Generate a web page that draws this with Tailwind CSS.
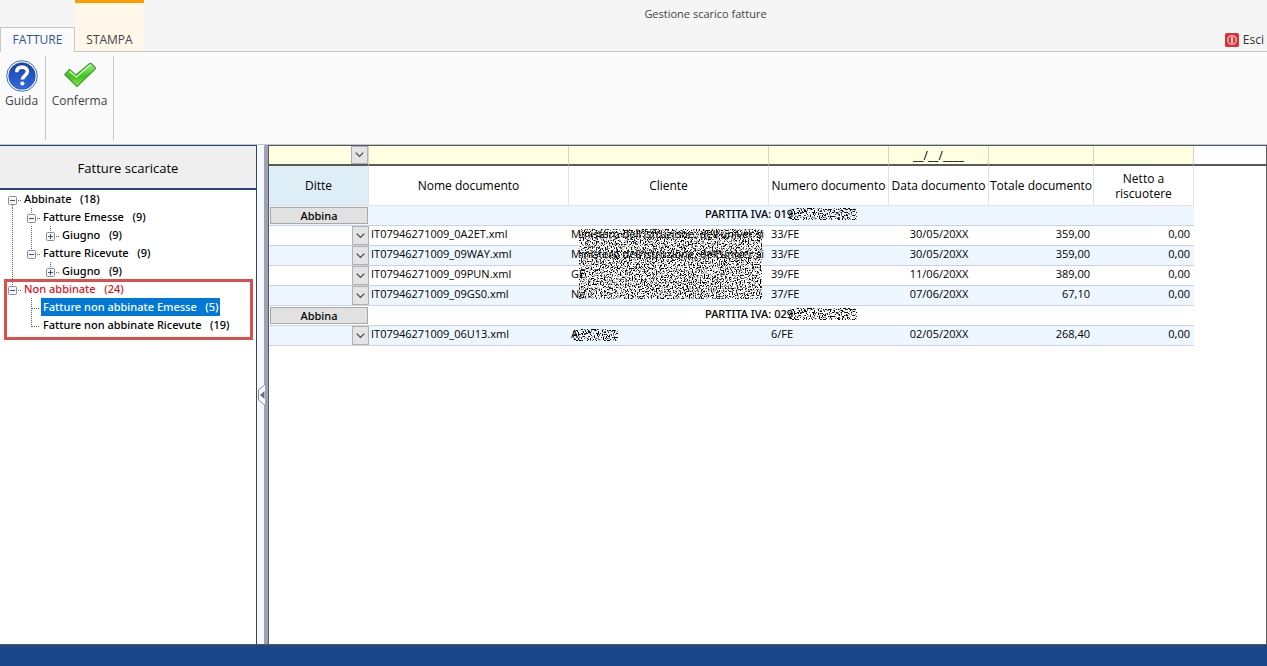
<!DOCTYPE html>
<html lang="it">
<head>
    <meta charset="UTF-8">
    <meta name="viewport" content="width=device-width, initial-scale=1.0">
    <script src="https://cdn.jsdelivr.net/npm/@tailwindcss/browser@4"></script>
    <title>Gestione scarico fatture</title>
</head>
<body class="flex h-screen flex-col overflow-hidden bg-[#f5f5f5] font-['Open_Sans',sans-serif] text-[12px] leading-4 text-black">
    <!-- Shared drawings -->
    <svg class="hidden" aria-hidden="true">
        <symbol id="tree-line" viewBox="0 0 19 18"><path d="M9.5 0v18" stroke="#666" stroke-dasharray="1 1" /></symbol>
        <symbol id="tree-tee" viewBox="0 0 19 18"><path d="M9.5 0v18M10 10.500h8" stroke="#666" stroke-dasharray="1 1" /></symbol>
        <symbol id="tree-elbow" viewBox="0 0 19 18"><path d="M9.5 0v11M10 10.500h8" stroke="#666" stroke-dasharray="1 1" /></symbol>
        <symbol id="tree-root" viewBox="0 0 19 18">
            <path d="M9.500 15v3M15 10.500h4" stroke="#666" stroke-dasharray="1 1" />
            <rect x="5.500" y="6.500" width="8" height="8" rx="1" fill="#f6f6f6" stroke="#8c8c8c" />
            <path d="M7 10.500h5" stroke="#3c4f9a" />
        </symbol>
        <symbol id="tree-minus" viewBox="0 0 19 18">
            <path d="M9.500 0v6M15 10.500h4" stroke="#666" stroke-dasharray="1 1" />
            <rect x="5.500" y="6.500" width="8" height="8" rx="1" fill="#f6f6f6" stroke="#8c8c8c" />
            <path d="M7 10.500h5" stroke="#3c4f9a" />
        </symbol>
        <symbol id="tree-plus" viewBox="0 0 19 18">
            <path d="M9.500 0v6M15 10.500h4" stroke="#666" stroke-dasharray="1 1" />
            <rect x="5.500" y="6.500" width="8" height="8" rx="1" fill="#f6f6f6" stroke="#8c8c8c" />
            <path d="M7 10.500h5M9.500 8v5" stroke="#3c4f9a" />
        </symbol>
        <symbol id="chevron" viewBox="0 0 9 6"><path d="M.7.7 4.500 4.500 8.300.7" fill="none" stroke="#444" stroke-width="1.200" /></symbol>
        <filter id="noise" x="0" y="0" width="100%" height="100%" color-interpolation-filters="sRGB">
            <feTurbulence type="fractalNoise" baseFrequency="0.75 0.71" numOctaves="4" seed="4" />
            <feColorMatrix values="6 0 0 0 -2.100  6 0 0 0 -2.100  6 0 0 0 -2.100  0 0 0 0 1" />
        </filter>
        <filter id="specks" x="0" y="0" width="100%" height="100%" color-interpolation-filters="sRGB">
            <feTurbulence type="fractalNoise" baseFrequency="0.75 0.71" numOctaves="4" seed="9" />
            <feColorMatrix values="0 0 0 0 0  0 0 0 0 0  0 0 0 0 0  -9 0 0 0 4.400" />
        </filter>
    </svg>

    <!-- Title and tabs -->
    <header class="flex h-[52px] shrink-0 items-stretch border-b border-[#c6c6c6]">
        <nav class="flex items-end">
            <a href="#" class="-mb-px flex h-[25px] w-[75px] items-center justify-center border border-b-0 border-[#c6c6c6] bg-[#fafafa] text-[#2b579a]">FATTURE</a>
            <a href="#" class="flex h-full w-[69px] items-end justify-center border-t-3 border-[#ff9c00] bg-[#fef7ea] pb-[3px] text-[#444]">STAMPA</a>
        </nav>
        <div class="grid flex-1">
            <h1 class="col-start-1 row-start-1 justify-self-center pt-[6px] text-[11px] text-[#444]">Gestione scarico fatture</h1>
            <button type="button" class="col-start-1 row-start-1 flex items-center gap-1 self-end justify-self-end pr-[3px] pb-[3px] text-[#333]">
                <svg class="size-[14px]" viewBox="0 0 14 14" aria-hidden="true">
                    <rect width="14" height="14" rx="1.500" fill="#d8343b" />
                    <circle cx="7" cy="7" r="4.200" fill="none" stroke="#f6c6c8" stroke-width="1.300" />
                    <path d="M7 4.300v5.400" stroke="#fff" stroke-width="1.600" />
                </svg>
                Esci
            </button>
        </div>
    </header>

    <!-- Ribbon -->
    <div class="flex h-[92px] shrink-0 bg-[#fafafa] pt-[4px] pb-1">
        <div class="flex w-[46px] justify-center border-r border-[#c6c6c6] pr-[2px]">
            <button type="button" class="flex flex-col items-center gap-px self-start pt-[4px] text-[#444]">
                <svg class="size-8" viewBox="0 0 32 32" aria-hidden="true">
                    <defs>
                        <linearGradient id="help" x1="0" y1="0" x2="0" y2="1">
                            <stop offset="0" stop-color="#1b3fa8" />
                            <stop offset="1" stop-color="#2f6be0" />
                        </linearGradient>
                    </defs>
                    <circle cx="16" cy="16" r="15.300" fill="#fff" stroke="#3f6fae" />
                    <circle cx="16" cy="16" r="13.300" fill="url(#help)" stroke="#1c439c" stroke-width=".6" />
                    <path d="M10.700 12.300c0-3.400 2.200-5.200 5.400-5.200 3.100 0 5.300 1.700 5.300 4.500 0 3.900-5 4.100-5 8" fill="none" stroke="#fff" stroke-width="3.600" />
                    <circle cx="16.400" cy="23.500" r="2.100" fill="#fff" />
                </svg>
                Guida
            </button>
        </div>
        <div class="flex w-[68px] justify-center border-r border-[#c6c6c6]">
            <button type="button" class="flex flex-col items-center gap-px self-start pt-[4px] text-[#444]">
                <svg class="size-8" viewBox="0 0 32 32" aria-hidden="true">
                    <defs>
                        <linearGradient id="tick" x1="0" y1="0" x2="0" y2="1">
                            <stop offset="0" stop-color="#a5f08c" />
                            <stop offset=".55" stop-color="#3ec41c" />
                            <stop offset="1" stop-color="#8be24a" />
                        </linearGradient>
                    </defs>
                    <path d="M.8 14.500 5.500 9.500 12 15 25.500 3.700c1-.6 1.800-.2 2.400.4l3.200 3.400c.5.600.4 1-.1 1.600L13 26.600Z" fill="url(#tick)" stroke="#3d9a35" stroke-width="1.200" stroke-linejoin="round" />
                    <path d="M26 5 12.500 17 5.600 11.300" fill="none" stroke="#dcfad0" stroke-width="1.200" />
                </svg>
                Conferma
            </button>
        </div>
    </div>

    <main class="flex min-h-0 flex-1 border-t border-[#b9c6da] bg-white">
        <!-- Invoice tree -->
        <aside class="flex w-[257px] shrink-0 flex-col border-t border-r border-[#27457c]">
            <h2 class="flex h-11 shrink-0 items-center justify-center border-b-2 border-[#27457c] bg-[#efefef] pt-[2px] text-[13px]">Fatture scaricate</h2>
            <ul class="font-['Noto_Sans',sans-serif] text-[11px] leading-[18px] font-medium [&_span]:whitespace-pre">
                <li>
                    <div class="flex h-[18px] pl-[3px]">
                        <button type="button" aria-label="Comprimi"><svg class="h-[18px] w-[19px]"><use href="#tree-root" /></svg></button>
                        <span class="px-[2px]">Abbinate   (18)</span>
                    </div>
                    <ul>
                        <li>
                            <div class="flex h-[18px] pl-[3px]">
                                <svg class="h-[18px] w-[19px]"><use href="#tree-line" /></svg>
                                <button type="button" aria-label="Comprimi"><svg class="h-[18px] w-[19px]"><use href="#tree-minus" /></svg></button>
                                <span class="px-[2px]">Fatture Emesse   (9)</span>
                            </div>
                            <div class="flex h-[18px] pl-[3px]">
                                <svg class="h-[18px] w-[19px]"><use href="#tree-line" /></svg>
                                <svg class="h-[18px] w-[19px]"><use href="#tree-line" /></svg>
                                <button type="button" aria-label="Espandi"><svg class="h-[18px] w-[19px]"><use href="#tree-plus" /></svg></button>
                                <span class="px-[2px]">Giugno   (9)</span>
                            </div>
                        </li>
                        <li>
                            <div class="flex h-[18px] pl-[3px]">
                                <svg class="h-[18px] w-[19px]"><use href="#tree-line" /></svg>
                                <button type="button" aria-label="Comprimi"><svg class="h-[18px] w-[19px]"><use href="#tree-minus" /></svg></button>
                                <span class="px-[2px]">Fatture Ricevute   (9)</span>
                            </div>
                            <div class="flex h-[18px] pl-[3px]">
                                <svg class="mr-[19px] h-[18px] w-[19px]"><use href="#tree-line" /></svg>
                                <button type="button" aria-label="Espandi"><svg class="h-[18px] w-[19px]"><use href="#tree-plus" /></svg></button>
                                <span class="px-[2px]">Giugno   (9)</span>
                            </div>
                        </li>
                    </ul>
                </li>
                <li class="relative">
                    <div class="pointer-events-none absolute -top-px right-[3px] -bottom-[6px] left-1 border-3 border-[#d9504c]"></div>
                    <div class="flex h-[18px] pl-[3px] text-[#e0101c]">
                        <button type="button" aria-label="Comprimi"><svg class="h-[18px] w-[19px]"><use href="#tree-minus" /></svg></button>
                        <span class="px-[2px]">Non abbinate   (24)</span>
                    </div>
                    <ul>
                        <li class="flex h-[18px] pl-[22px]">
                            <svg class="h-[18px] w-[19px]"><use href="#tree-tee" /></svg>
                            <span class="bg-[#0078d7] px-[2px] text-white">Fatture non abbinate Emesse   (5)</span>
                        </li>
                        <li class="flex h-[18px] pl-[22px]">
                            <svg class="h-[18px] w-[19px]"><use href="#tree-elbow" /></svg>
                            <span class="px-[2px]">Fatture non abbinate Ricevute   (19)</span>
                        </li>
                    </ul>
                </li>
            </ul>
        </aside>

        <!-- Splitter -->
        <div class="flex w-[11px] shrink-0 items-center bg-[linear-gradient(90deg,#f8f8ff_7px,#a0a0b8_7px)]">
            <svg class="h-[22px] w-[8px]" viewBox="0 0 8 22" aria-hidden="true">
                <path d="M8 .5 1.500 6v10L8 21.500" fill="#f8f8ff" stroke="#8a8a96" />
                <path d="M7.500 7v8L3 11Z" fill="#6a6a78" />
            </svg>
        </div>

        <!-- Documents grid -->
        <section class="min-w-0 flex-1 border-t border-r border-l border-[#5a5a5a]">
            <div class="bg-[linear-gradient(#5a5a5a,#5a5a5a)] bg-[length:100%_2px] bg-[position:0_18px] bg-no-repeat">
            <table class="w-[925px] table-fixed border-separate border-spacing-0">
                <colgroup>
                    <col class="w-[100px]">
                    <col class="w-[200px]">
                    <col class="w-[200px]">
                    <col class="w-[120px]">
                    <col class="w-[100px]">
                    <col class="w-[105px]">
                    <col class="w-[100px]">
                </colgroup>
                <thead>
                    <tr class="h-5 bg-[#ffffe1] *:border-r *:border-b-2 *:border-r-[#d5d5c5] *:border-b-[#5a5a5a] *:p-0">
                        <td>
                            <div class="relative h-[18px]">
                                <select aria-label="Filtro ditte" class="block h-[18px] w-full appearance-none"><option></option></select>
                                <span class="pointer-events-none absolute inset-y-0 right-0 flex w-[17px] items-center justify-center border border-[#b0b0b0] bg-[#e4e4e4]"><svg class="h-[6px] w-[9px]"><use href="#chevron" /></svg></span>
                            </div>
                        </td>
                        <td><input type="text" aria-label="Filtro nome documento" class="block h-[18px] w-full"></td>
                        <td><input type="text" aria-label="Filtro cliente" class="block h-[18px] w-full"></td>
                        <td><input type="text" aria-label="Filtro numero documento" class="block h-[18px] w-full"></td>
                        <td><input type="text" aria-label="Filtro data documento" value="__/__/____" class="block h-[18px] w-full text-center"></td>
                        <td><input type="text" aria-label="Filtro totale documento" class="block h-[18px] w-full"></td>
                        <td><input type="text" aria-label="Filtro netto a riscuotere" class="block h-[18px] w-full"></td>
                    </tr>
                    <tr class="h-10 leading-[15px] *:border-r *:border-b *:border-[#e2e2e2] *:p-0 *:font-normal">
                        <th class="bg-[#deeef7]">Ditte</th>
                        <th>Nome documento</th>
                        <th>Cliente</th>
                        <th>Numero documento</th>
                        <th>Data documento</th>
                        <th>Totale documento</th>
                        <th>Netto a<br>riscuotere</th>
                    </tr>
                </thead>
                <tbody id="documents" class="text-[11px]"></tbody>
            </table>
            </div>
        </section>
    </main>

    <footer class="h-[22px] shrink-0 border-t border-[#5a5a5a] bg-[#1a4789]"></footer>

    <script>
        // Only the readable start of a VAT number is kept, the rest is masked
        const groups = [
            {
                vat: "019",
                documents: [
                    { file: "IT07946271009_0A2ET.xml", client: "Ministero dell'istruzione, dell'univer si", number: "33/FE", date: "30/05/20XX", total: "359,00", net: "0,00" },
                    { file: "IT07946271009_09WAY.xml", client: "Ministero dell'istruzione, dell'univer si", number: "33/FE", date: "30/05/20XX", total: "359,00", net: "0,00" },
                    { file: "IT07946271009_09PUN.xml", client: "GE", number: "39/FE", date: "11/06/20XX", total: "389,00", net: "0,00" },
                    { file: "IT07946271009_09GS0.xml", client: "Ne", number: "37/FE", date: "07/06/20XX", total: "67,10", net: "0,00" },
                ],
            },
            {
                vat: "029",
                documents: [
                    { file: "IT07946271009_06U13.xml", client: "A", number: "6/FE", date: "02/05/20XX", total: "268,40", net: "0,00" },
                ],
            },
        ];

        const groupRow = (group) => `
            <tr class="h-5 even:bg-white odd:bg-[#eef7ff] *:border-b *:border-[#ccd3da] *:p-0">
                <td><button type="button" class="ml-px block h-[17px] w-[98px] border border-[#a8a8a8] bg-[#e1e1e1] font-['Noto_Sans',sans-serif] leading-[15px] font-medium">Abbina</button></td>
                <td colspan="6">
                    <div class="flex h-[19px] pl-[336px] font-['Noto_Sans',sans-serif] font-medium">PARTITA IVA: ${group.vat}<svg class="mt-[2px] -ml-1 h-3 w-[68px]" aria-hidden="true"><rect width="100%" height="100%" filter="url(#specks)" /></svg></div>
                </td>
            </tr>`;

        // One large mask spans the clients of the first group
        const clientMask = (groupIndex, index) => {
            if (index > 0) return "";
            return groupIndex === 0
                ? `<svg class="absolute top-[3px] left-[10px] h-[70px] w-[183px]" aria-hidden="true"><rect width="100%" height="100%" filter="url(#noise)" /></svg>`
                : `<svg class="absolute top-[3px] left-1 h-3 w-[45px]" aria-hidden="true"><rect width="100%" height="100%" filter="url(#specks)" /></svg>`;
        };

        const documentRow = (doc, groupIndex, index) => `
            <tr class="h-5 even:bg-white odd:bg-[#eef7ff] *:border-b *:border-[#ccd3da] *:p-0">
                <td>
                    <div class="relative h-[19px]">
                        <select aria-label="Ditta per ${doc.file}" class="block h-[19px] w-full appearance-none"><option></option></select>
                        <span class="pointer-events-none absolute inset-y-0 right-0 flex w-[17px] items-center justify-center border border-[#b0b0b0] bg-[#e4e4e4]"><svg class="h-[6px] w-[9px]"><use href="#chevron" /></svg></span>
                    </div>
                </td>
                <td><div class="h-[19px] pl-[2px]">${doc.file}</div></td>
                <td><div class="relative h-[19px] pl-[2px] whitespace-nowrap">${clientMask(groupIndex, index)}<span class="relative">${doc.client}</span></div></td>
                <td><div class="h-[19px] pl-[2px]">${doc.number}</div></td>
                <td><div class="h-[19px] text-center">${doc.date}</div></td>
                <td><div class="h-[19px] pr-1 text-right">${doc.total}</div></td>
                <td><div class="h-[19px] pr-1 text-right">${doc.net}</div></td>
            </tr>`;

        document.getElementById("documents").innerHTML = groups
            .map((group, g) => groupRow(group) + group.documents.map((doc, i) => documentRow(doc, g, i)).join(""))
            .join("");
    </script>
</body>
</html>
